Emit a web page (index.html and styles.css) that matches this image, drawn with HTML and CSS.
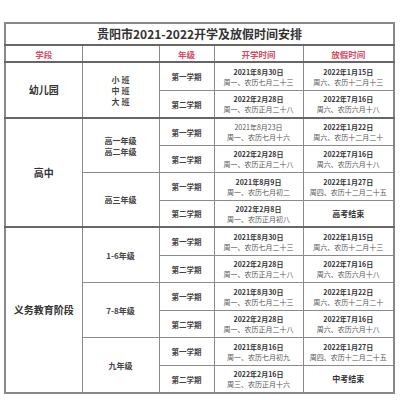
FILE: index.html
```html
<!DOCTYPE html>
<html lang="zh">
<head>
<meta charset="utf-8">
<link rel="stylesheet" href="styles.css">
</head>
<body>
<table class="sched">
  <colgroup>
    <col class="c1"><col class="c2"><col class="c3"><col class="c4"><col class="c5">
  </colgroup>
  <tr class="title"><td colspan="5">贵阳市2021-2022开学及放假时间安排</td></tr>
  <tr class="head"><td>学段</td><td></td><td>年级</td><td>开学时间</td><td>放假时间</td></tr>

  <tr class="r28 sec">
    <td rowspan="2" class="stage">幼儿园</td>
    <td rowspan="2" class="grade">小 班<br>中 班<br>大 班</td>
    <td class="term">第一学期</td>
    <td class="date"><b>2021年8月30日</b><br>周一、农历七月二十三</td>
    <td class="date"><b>2022年1月15日</b><br>周六、农历十二月十三</td>
  </tr>
  <tr class="r27 sub">
    <td class="term">第二学期</td>
    <td class="date"><b>2022年2月28日</b><br>周一、农历正月二十八</td>
    <td class="date"><b>2022年7月16日</b><br>周六、农历六月十八</td>
  </tr>

  <tr class="r27 sec">
    <td rowspan="4" class="stage">高中</td>
    <td rowspan="2" class="grade">高一年级<br>高二年级</td>
    <td class="term">第一学期</td>
    <td class="date">2021年8月23日<br>周一、农历七月十六</td>
    <td class="date"><b>2022年1月22日</b><br>周六、农历十二月二十</td>
  </tr>
  <tr class="r27 sub">
    <td class="term">第二学期</td>
    <td class="date"><b>2022年2月28日</b><br>周一、农历正月二十八</td>
    <td class="date"><b>2022年7月16日</b><br>周六、农历六月十八</td>
  </tr>
  <tr class="r28 mid">
    <td rowspan="2" class="grade">高三年级</td>
    <td class="term">第一学期</td>
    <td class="date"><b>2021年8月9日</b><br>周一、农历七月初二</td>
    <td class="date"><b>2022年1月27日</b><br>周四、农历十二月二十五</td>
  </tr>
  <tr class="r26 sub">
    <td class="term">第二学期</td>
    <td class="date"><b>2022年2月8日</b><br>周一、农历正月初八</td>
    <td class="date end">高考结束</td>
  </tr>

  <tr class="r28 sec">
    <td rowspan="6" class="stage">义务教育阶段</td>
    <td rowspan="2" class="grade">1-6年级</td>
    <td class="term">第一学期</td>
    <td class="date"><b>2021年8月30日</b><br>周一、农历七月二十三</td>
    <td class="date"><b>2022年1月15日</b><br>周六、农历十二月十三</td>
  </tr>
  <tr class="r27 sub">
    <td class="term">第二学期</td>
    <td class="date"><b>2022年2月28日</b><br>周一、农历正月二十八</td>
    <td class="date"><b>2022年7月16日</b><br>周六、农历六月十八</td>
  </tr>
  <tr class="r28 mid">
    <td rowspan="2" class="grade">7-8年级</td>
    <td class="term">第一学期</td>
    <td class="date"><b>2021年8月30日</b><br>周一、农历七月二十三</td>
    <td class="date"><b>2022年1月22日</b><br>周六、农历十二月二十</td>
  </tr>
  <tr class="r27 sub">
    <td class="term">第二学期</td>
    <td class="date"><b>2022年2月28日</b><br>周一、农历正月二十八</td>
    <td class="date"><b>2022年7月16日</b><br>周六、农历六月十八</td>
  </tr>
  <tr class="r28 mid">
    <td rowspan="2" class="grade">九年级</td>
    <td class="term">第一学期</td>
    <td class="date"><b>2021年8月16日</b><br>周一、农历七月初九</td>
    <td class="date"><b>2022年1月27日</b><br>周四、农历十二月二十五</td>
  </tr>
  <tr class="r27 sub">
    <td class="term">第二学期</td>
    <td class="date"><b>2022年2月16日</b><br>周三、农历正月十六</td>
    <td class="date end">中考结束</td>
  </tr>
</table>
</body>
</html>
```
FILE: styles.css
```css
html, body {
  margin: 0;
  padding: 0;
  background: #ffffff;
}
body {
  padding: 22px 0 0 4px;
  font-family: "Noto Sans CJK SC", "Noto Sans", sans-serif;
  color: #333333;
}
.sched {
  border-collapse: collapse;
  table-layout: fixed;
  width: 389px;
  border: 2px solid #888888;
}
.c1 { width: 77px; }
.c2 { width: 77px; }
.c3 { width: 55px; }
.c4 { width: 89px; }
.c5 { width: 91px; }
.sched td {
  padding: 0;
  border: 1px solid #8a8a8a;
  text-align: center;
  vertical-align: middle;
  font-size: 8px;
  line-height: 10px;
}
.title td {
  height: 20px;
  font-size: 12px;
  font-weight: bold;
  color: #333333;
  line-height: 14px;
  border-bottom: 2px solid #666666;
}
.head td {
  height: 15px;
  color: #d84a62;
  font-weight: bold;
  font-size: 8.5px;
  line-height: 12px;
  border-bottom: 2px solid #666666;
}
.r28 td { height: 27px; }
.r27 td { height: 26px; }
.r26 td { height: 25px; }
.sec td { border-top: 2px solid #666666; }
.mid td { border-top: 1.5px solid #777777; }
.sub td { border-top: 1px solid #9a9a9a; }
.sched .stage {
  font-size: 10px;
  font-weight: bold;
  line-height: 14px;
  color: #333333;
}
.sched .grade {
  font-size: 8px;
  font-weight: bold;
  line-height: 11px;
  color: #444444;
}
.sched .term {
  font-size: 7.5px;
  font-weight: bold;
  line-height: 11px;
  color: #444444;
}
.sched .date {
  font-size: 7px;
  line-height: 10px;
  color: #555555;
}
.sched .date b {
  font-weight: bold;
  color: #333333;
}
.sched .end {
  font-weight: bold;
  font-size: 8px;
  line-height: 12px;
  color: #333333;
}
```
